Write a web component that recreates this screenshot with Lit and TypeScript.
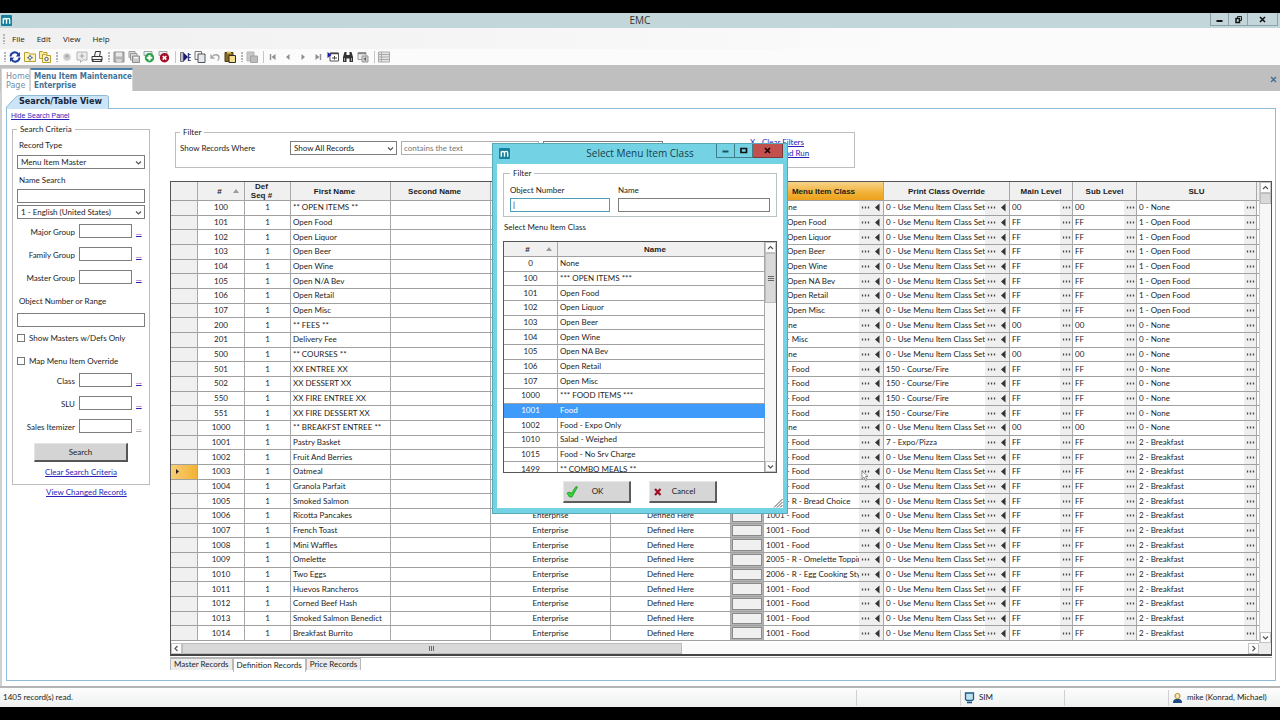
import { LitElement, html, css, svg, nothing } from "lit";
import { customElement, state } from "lit/decorators.js";
import { classMap } from "lit/directives/class-map.js";

type Rec = [id: string, name: string, cls: string, print: string, level: string, slu: string];

const SET = "0 - Use Menu Item Class Set";
const FIRE = "150 - Course/Fire";
const FOOD = "1001 - Food";
const BRK = "2 - Breakfast";
const OPEN = "1 - Open Food";
const NONE = "0 - None";

const RECORDS: Rec[] = [
  ["100", "** OPEN ITEMS **", NONE, SET, "00", NONE],
  ["101", "Open Food", "101 - Open Food", SET, "FF", OPEN],
  ["102", "Open Liquor", "102 - Open Liquor", SET, "FF", OPEN],
  ["103", "Open Beer", "103 - Open Beer", SET, "FF", OPEN],
  ["104", "Open Wine", "104 - Open Wine", SET, "FF", OPEN],
  ["105", "Open N/A Bev", "105 - Open NA Bev", SET, "FF", OPEN],
  ["106", "Open Retail", "106 - Open Retail", SET, "FF", OPEN],
  ["107", "Open Misc", "107 - Open Misc", SET, "FF", OPEN],
  ["200", "** FEES **", NONE, SET, "00", NONE],
  ["201", "Delivery Fee", "1500 - Misc", SET, "FF", NONE],
  ["500", "** COURSES **", NONE, SET, "00", NONE],
  ["501", "XX ENTREE XX", FOOD, FIRE, "FF", NONE],
  ["502", "XX DESSERT XX", FOOD, FIRE, "FF", NONE],
  ["550", "XX FIRE ENTREE XX", FOOD, FIRE, "FF", NONE],
  ["551", "XX FIRE DESSERT XX", FOOD, FIRE, "FF", NONE],
  ["1000", "** BREAKFST ENTREE **", NONE, SET, "00", NONE],
  ["1001", "Pastry Basket", FOOD, "7 - Expo/Pizza", "FF", BRK],
  ["1002", "Fruit And Berries", FOOD, SET, "FF", BRK],
  ["1003", "Oatmeal", FOOD, SET, "FF", BRK],
  ["1004", "Granola Parfait", FOOD, SET, "FF", BRK],
  ["1005", "Smoked Salmon", "2001 - R - Bread Choice", SET, "FF", BRK],
  ["1006", "Ricotta Pancakes", FOOD, SET, "FF", BRK],
  ["1007", "French Toast", FOOD, SET, "FF", BRK],
  ["1008", "Mini Waffles", FOOD, SET, "FF", BRK],
  ["1009", "Omelette", "2005 - R - Omelette Topping", SET, "FF", BRK],
  ["1010", "Two Eggs", "2006 - R - Egg Cooking Style", SET, "FF", BRK],
  ["1011", "Huevos Rancheros", FOOD, SET, "FF", BRK],
  ["1012", "Corned Beef Hash", FOOD, SET, "FF", BRK],
  ["1013", "Smoked Salmon Benedict", FOOD, SET, "FF", BRK],
  ["1014", "Breakfast Burrito", FOOD, SET, "FF", BRK],
];

const CLASSES: [string, string][] = [
  ["0", "None"],
  ["100", "*** OPEN ITEMS ***"],
  ["101", "Open Food"],
  ["102", "Open Liquor"],
  ["103", "Open Beer"],
  ["104", "Open Wine"],
  ["105", "Open NA Bev"],
  ["106", "Open Retail"],
  ["107", "Open Misc"],
  ["1000", "*** FOOD ITEMS ***"],
  ["1001", "Food"],
  ["1002", "Food - Expo Only"],
  ["1010", "Salad - Weighed"],
  ["1015", "Food - No Srv Charge"],
  ["1499", "** COMBO MEALS **"],
];

const ICONS: Record<string, unknown> = {
  refresh: svg`<path d="M1.500 5.500A4.300 4.300 0 0 1 9.500 3.500M10.500 6.500A4.300 4.300 0 0 1 2.500 8.500" fill="none" stroke="#1c3f9e" stroke-width="2"/><path d="M11 1v4.500H6.800zM1 11V6.500h4.200z" fill="#1c3f9e"/>`,
  folder: svg`<path d="M.5 10.500v-9h4l1 1.500h6v7.500z" fill="#fbf4bd" stroke="#b9a02c"/><path d="M6 4v5.500M3.300 6.700h5.400" stroke="#2f3f86" stroke-width="1"/><circle cx="6" cy="6.700" r="1.500" fill="#fff" stroke="#2f3f86" stroke-width=".7"/>`,
  folders: svg`<path d="M.5 7.500v-7h3l1 1h3.500v6z" fill="#f7eca0" stroke="#b9a02c"/><path d="M3.500 11.500v-8h3l1 1h4v7z" fill="#fbf4bd" stroke="#b9a02c"/><circle cx="7.500" cy="8" r="1.700" fill="#fff" stroke="#2f3f86" stroke-width=".9"/>`,
  dot: svg`<circle cx="6" cy="6" r="3.600" fill="#c9c9c9" stroke="#dcdcdc"/><circle cx="6" cy="5" r="1.600" fill="#a9a9a9"/>`,
  help: svg`<path d="M1 1h10v8H7l-2.500 2.500V9H1z" fill="#ececec" stroke="#b3b3b3"/><path d="M6 2.500v5M3.800 5h4.400" stroke="#a0a0a0"/>`,
  print: svg`<path d="M3.500 5.500l1-5h5l-1 5M1 5.500h10v4H1z" fill="#f4f4f4" stroke="#333"/><path d="M1 8h10v3H1z" fill="#3c3c3c"/><path d="M2.500 9.500h7" stroke="#eee"/>`,
  save: svg`<path d="M1 1h10v10H1z" fill="#b5b5b5" stroke="#8f8f8f"/><path d="M3 1.500h6v4H3z" fill="#e9e9e9"/><path d="M3.500 8h5v3h-5z" fill="#d6d6d6"/>`,
  saveall: svg`<path d="M1 .5h6v6H1z" fill="#ddd" stroke="#999"/><path d="M2.500 2.500h6.500v6.500H2.500z" fill="#ddd" stroke="#999"/><path d="M4.500 5h7v6.500h-7z" fill="#c9c9c9" stroke="#8d8d8d"/><path d="M6 6h4v1.500H6z" fill="#f4f4f4"/>`,
  add: svg`<path d="M1 .5h8v4H1z" fill="#e8eef0" stroke="#9aa6a6"/><circle cx="6.500" cy="6.800" r="4.700" fill="#27a34a"/><path d="M6.500 4v5.600M3.700 6.800h5.600" stroke="#fff" stroke-width="2"/>`,
  remove: svg`<path d="M1 .5h8v4H1z" fill="#e8eef0" stroke="#9aa6a6"/><circle cx="6.500" cy="6.800" r="4.700" fill="#a30d24"/><path d="M4.700 5l3.600 3.600M8.300 5L4.700 8.600" stroke="#fff" stroke-width="1.700"/>`,
  importer: svg`<path d="M1.500 1.500h3v9h-3z" fill="#b9bed0" stroke="#777"/><path d="M4.500 1.500L9 6l-4.500 4.500z" fill="#191970"/><path d="M9.500 2v8M11 3v1M11 6v1M11 9v1" stroke="#33397c" stroke-width="1.400"/>`,
  copy: svg`<path d="M1 .5h6.500v8H1z" fill="#f4f4f4" stroke="#777"/><path d="M4 3h7v8.500H4z" fill="#e4e9ef" stroke="#555"/>`,
  undo: svg`<path d="M2 3.500v3.500h3.500" fill="none" stroke="#a5a5a5" stroke-width="1.300"/><path d="M2.500 6.500C5 2.500 10 3 10 7c0 1-.5 2-1.500 2.500" fill="none" stroke="#a5a5a5" stroke-width="1.300"/>`,
  paste: svg`<path d="M1 1.500h8v9H1z" fill="#8b6b1f" stroke="#4c3a10"/><path d="M3 .5h4v2H3z" fill="#d9c66a"/><path d="M5 4.500h6.500v7H5z" fill="#f2df8c" stroke="#2c2c2c"/>`,
  form: svg`<path d="M1 1h7v9H1z" fill="#c8c8c8" stroke="#b5b5b5"/><path d="M4.500 5h7v6.500h-7z" fill="#bdbdbd" stroke="#a2a2a2"/>`,
  first: svg`<path d="M3.500 3v6" stroke="#8a8f96" stroke-width="1.400"/><path d="M8.500 3v6L4.500 6z" fill="#8a8f96"/>`,
  prev: svg`<path d="M7.500 3v6L4 6z" fill="#8a8f96"/>`,
  next: svg`<path d="M4.500 3v6L8 6z" fill="#8a8f96"/>`,
  last: svg`<path d="M8.500 3v6" stroke="#8a8f96" stroke-width="1.400"/><path d="M3.500 3v6L7.500 6z" fill="#8a8f96"/>`,
  goto: svg`<path d="M3 2h8.500v8H3z" fill="#fff" stroke="#555"/><path d="M3 2.500h8.500" stroke="#444" stroke-width="1.500"/><path d="M.5 1l4 3-4 3z" fill="#1a1ab0"/><path d="M5 7h5M7.500 5v3.500" stroke="#444"/>`,
  find: svg`<path d="M2.500 1h2v3h3V1h2l1.500 5v5H7.500V7.500h-3V11H1V6z" fill="#333"/><path d="M2.500 7v3M9.500 7v3" stroke="#aaa"/>`,
  link: svg`<path d="M1 1.500h8v7H1z" fill="#eee" stroke="#999"/><path d="M1 2.500h8" stroke="#888" stroke-width="1.500"/><path d="M5 5h6v6H5z" fill="#ccc" stroke="#999"/><path d="M9 6v4L6.500 8z" fill="#666"/>`,
  rows: svg`<path d="M.5 1h11v10H.5z" fill="#e6e6e6" stroke="#a9a9a9"/><path d="M.5 3.500h11M.5 6h11M.5 8.500h11M3.500 1v10" stroke="#a9a9a9"/>`,
};

const GROUPS: string[][] = [
  ["refresh", "folder", "folders"],
  ["dot", "help", "print"],
  ["save", "saveall", "add", "remove", "|", "importer", "copy", "undo", "paste"],
  ["form", "|", "first", "prev", "next", "last", "goto", "find", "link", "|", "rows"],
];

const logo = html`<svg class="logo" viewBox="0 0 12 12" aria-hidden="true">
  <rect width="12" height="12" rx="1" fill="#17809c" />
  <path d="M2.500 9.500V3.500M2.500 5C3 3.500 6 3 6 5.500v4M6 5.500c0-2.500 3.500-2.500 3.500 0v4" fill="none" stroke="#fff" stroke-width="1.500" />
</svg>`;

const chevron = (dir: "up" | "down" | "left" | "right") => {
  const d = { up: "M2 6l2.500-2.500L7 6", down: "M2 3.500L4.500 6 7 3.500", left: "M5.500 2L3 4.500 5.500 7", right: "M3.500 2L6 4.500 3.500 7" }[dir];
  return html`<svg class="chev" viewBox="0 0 9 9" aria-hidden="true"><path d=${d} fill="none" stroke="#555" stroke-width="1.200" /></svg>`;
};

const base = css`
  :host { box-sizing: border-box; font: 8px/11px Lato, "Liberation Sans", sans-serif; color: #1c1c1c; }
  * { box-sizing: border-box; }
  button, input, select { font: inherit; color: inherit; margin: 0; padding: 0; border: 0; border-radius: 0; background: none; min-width: 0; }
  fieldset { margin: 0; min-width: 0; border: 1px solid #bdbdbd; padding: 0 4px; }
  legend { padding: 0 3px; line-height: 10px; }
  a { color: #2a22b8; text-decoration: underline; }
  input.box { background: #fff; border: 1px solid #7d7d7d; height: 14px; width: 100%; padding: 0 2px; }
  table { display: flex; flex-direction: column; border-spacing: 0; }
  tr { display: grid; }
  th, td { padding: 0; min-width: 0; white-space: nowrap; overflow: hidden; display: flex; align-items: center; border-right: 1px solid #a8a8a8; border-bottom: 1px solid #a0a0a0; }
  th { justify-content: center; font-family: "Liberation Sans", sans-serif; font-weight: 700; background: #f0f0f0; }
  th.lead { padding-right: 12px; }
  .num { justify-content: center; }
  .sort { width: 6px; height: 4px; }
  .chev { width: 9px; height: 9px; display: block; }
  .logo { width: 12px; height: 12px; display: block; }
  .vbar { display: flex; flex-direction: column; background: #f7f7f7; }
  .arrow { width: 11px; height: 11px; display: grid; place-items: center; background: #fdfdfd; border: 1px solid #c4c4c4; flex: none; }
  .thumb { background: #d9d9d9; border: 1px solid #bcbcbc; display: grid; place-items: center; }
  .fill { flex: 1; }
  .bars { width: 6px; height: 5px; }
`;

const sortMark = html`<svg class="sort" viewBox="0 0 6 4" aria-hidden="true"><path d="M0 4l3-4 3 4z" fill="#9a9a9a" /></svg>`;

@customElement("class-dialog")
export class ClassDialog extends LitElement {
  @state() private selected = "1001";

  static styles = [base, css`
    :host { display: flex; flex-direction: column; background: #73d2e4; border: 1px solid #5aa9b8; padding: 0 4px 5px; }
    .title { display: grid; grid-template-columns: 56px 1fr 56px; align-items: start; height: 20px; }
    .title .logo { margin: 4px 0 0 2px; width: 11px; height: 11px; }
    h1 { margin: 3px 0 0; font: 400 10px/13px "Open Sans", "Noto Sans", sans-serif; text-align: center; color: #16414b; white-space: nowrap; }
    .wins { display: flex; justify-content: flex-end; width: 67px; justify-self: end; }
    .wins button { height: 14px; width: 19px; display: grid; place-items: center; border: 1px solid #3f7f8c; border-top: 0; border-left: 0; }
    .wins button:first-child { border-left: 1px solid #3f7f8c; }
    .wins .x { width: 30px; background: #c1504f; border-color: #7d3a3c; }
    .wins svg { width: 9px; height: 9px; }
    .body { background: #fff; flex: 1; padding: 4px 6px 0; display: flex; flex-direction: column; position: relative; }
    fieldset { display: grid; grid-template-columns: 100px 1fr; column-gap: 8px; padding: 6px 6px 4px; border-color: #b9c3c6; }
    label { display: flex; flex-direction: column; gap: 2px; line-height: 12px; }
    input.first { border-color: #4f9fb5; }
    .caption { margin: 4px 1px 8px; line-height: 12px; }
    .list { display: flex; border: 1px solid #555; height: 232px; }
    table { flex: 1; overflow: hidden; }
    thead { flex: none; height: 15px; }
    tr { grid-template-columns: 54px 1fr; height: 100%; }
    th.id { display: grid; grid-template-columns: 1fr 8px; padding: 0 3px 0 5px; text-align: center; }
    tbody { display: grid; grid-template-rows: repeat(15, minmax(0, 1fr)); height: 220px; flex: none; background: #fff; }
    td:last-child { padding-left: 2px; }
    .on td { background: #3f9bfa; color: #fff; border-color: #3f9bfa; }
    .thumb { height: 50px; }
    .actions { display: flex; gap: 18px; padding: 8px 0 0 60px; }
    .actions button { width: 68px; height: 22px; background: #d6d6d6; border: 1px solid #e8e8e8; border-right: 2px solid #5c5c5c; border-bottom: 2px solid #5c5c5c; display: grid; grid-template-columns: 14px 1fr 14px; align-items: center; padding-left: 2px; }
    .actions svg { width: 12px; height: 12px; }
    .grip { position: absolute; right: 0; bottom: 0; width: 10px; height: 10px; }
  `];

  render() {
    return html`
      <div class="title">
        ${logo}
        <h1>Select Menu Item Class</h1>
        <div class="wins">
          <button aria-label="Minimize"><svg viewBox="0 0 9 9"><path d="M1.500 5.500h6" stroke="#1c5260" stroke-width="2" /></svg></button>
          <button aria-label="Maximize"><svg viewBox="0 0 9 9"><path d="M2 2.500h5.500v4H2z" fill="none" stroke="#111" stroke-width="1.700" /></svg></button>
          <button class="x" aria-label="Close"><svg viewBox="0 0 9 9"><path d="M2 2l5 5M7 2L2 7" stroke="#200" stroke-width="1.700" /></svg></button>
        </div>
      </div>
      <div class="body">
        <fieldset>
          <legend>Filter</legend>
          <label>Object Number<input class="box first" value="|" /></label>
          <label>Name<input class="box" /></label>
        </fieldset>
        <div class="caption">Select Menu Item Class</div>
        <div class="list">
          <table>
            <thead><tr><th class="id"><span>#</span>${sortMark}</th><th class="lead">Name</th></tr></thead>
            <tbody>
              ${CLASSES.map(([id, name]) => html`<tr class=${classMap({ on: id === this.selected })} @click=${() => (this.selected = id)}>
                <td class="num">${id}</td><td>${name}</td></tr>`)}
            </tbody>
          </table>
          <div class="vbar">
            <div class="arrow">${chevron("up")}</div>
            <div class="thumb"><svg class="bars" viewBox="0 0 6 5"><path d="M0 .5h6M0 2.500h6M0 4.500h6" stroke="#666" /></svg></div>
            <div class="fill"></div>
            <div class="arrow">${chevron("down")}</div>
          </div>
        </div>
        <div class="actions">
          <button><svg viewBox="0 0 12 12"><path d="M1 7l3-1 1 2 5-7.500L11.500 1 6 11H3.500z" fill="#2ddc2d" stroke="#128a18" stroke-width=".7" /></svg><span>OK</span></button>
          <button><svg viewBox="0 0 12 12"><path d="M3 3l5.500 6M8.500 3L3 9" stroke="#9e1022" stroke-width="2.200" /></svg><span>Cancel</span></button>
        </div>
        <svg class="grip" viewBox="0 0 10 10"><path d="M1 9.500L9.500 1M4 9.500L9.500 4M7 9.500L9.500 7" stroke="#555" /></svg>
      </div>`;
  }
}

@customElement("app-root")
export class AppRoot extends LitElement {
  @state() private current = "1003";

  static styles = [base, css`
    :host { display: flex; flex-direction: column; height: 100vh; padding: 13px 0; background: #000; position: relative; overflow: hidden; }
    .title { display: grid; grid-template-columns: 80px 1fr 80px; height: 15px; background: #c3d7da; flex: none; }
    .title .logo { margin: 2px 0 0 1px; width: 11px; height: 11px; }
    .title h1 { margin: 0; font: 400 10px/15px "Open Sans", "Noto Sans", sans-serif; text-align: center; color: #333; }
    .wins { display: flex; justify-content: flex-end; padding-right: 2px; }
    .wins button { width: 19px; height: 13px; border: 1px solid #8ba3a8; border-top: 0; border-left: 0; display: grid; place-items: center; }
    .wins button:first-child { border-left: 1px solid #8ba3a8; }
    .wins button:last-child { width: 30px; }
    .wins svg { width: 9px; height: 9px; }
    .menu { display: flex; align-items: center; height: 21px; flex: none; background: linear-gradient(90deg, #f0f0f0, #fbfbfb 75%); padding-left: 3px; font: 8px/12px "Open Sans", "Noto Sans", sans-serif; color: #222; }
    .menu button { padding: 0 6px; }
    .grip { width: 3px; height: 10px; background: radial-gradient(circle at 1px 1px, #b5b5b5 1px, transparent 1px) 0 0 / 3px 3px; }
    .tools { display: flex; align-items: center; gap: 4px; height: 16px; flex: none; background: #fbfbfb; padding-left: 4px; }
    .group { display: flex; align-items: center; }
    .tool { width: 15px; height: 15px; display: grid; place-items: center; }
    .tool svg { width: 12px; height: 12px; }
    .rule { width: 6px; height: 12px; background: linear-gradient(#c6c6c6, #c6c6c6) 4px 0 / 1px 100% no-repeat; }
    .strip { display: flex; align-items: flex-start; background: #bfbfbf; height: 26px; padding: 3px 0 0 1px; flex: none; font-family: "DejaVu Sans", sans-serif; line-height: 9px; color: #6f93ac; }
    .strip button { background: #fff; height: 23px; padding: 2px 0 0 4px; text-align: left; border: 1px solid #d5d5d5; border-bottom: 0; width: 29px; }
    .strip .now { width: 103px; font-weight: 700; font-family: "DejaVu Sans Condensed", "DejaVu Sans", sans-serif; color: #437196; border-top: 2px solid #4d7da3; padding: 1px 0 0 3px; white-space: nowrap; }
    .strip .close { margin-left: auto; width: 14px; background: none; border: 0; }
    .strip svg { width: 7px; height: 7px; }
    .page { flex: 1; min-height: 0; background: #fff; border-left: 2px solid #d0d0d0; padding: 4px 4px 5px 4px; display: flex; flex-direction: column; }
    .view { position: relative; display: block; width: 103px; height: 13px; flex: none; z-index: 1; }
    .view svg { position: absolute; inset: 0; width: 103px; height: 14px; }
    .view span { position: relative; display: block; padding-left: 13px; font: 700 9px/13px "DejaVu Sans Condensed", "DejaVu Sans", sans-serif; color: #14243a; white-space: nowrap; }
    .panel { flex: 1; min-height: 0; border: 1px solid #8fbbd9; display: grid; grid-template-columns: 159px minmax(0, 1fr); padding: 2px 3px 9px 4px; }
    .side { display: flex; flex-direction: column; align-items: flex-start; }
    .hide { font: 7px/10px "Liberation Sans", sans-serif; }
    .criteria { width: 138px; margin: 3px 0 0 1px; padding: 5px 4px 6px; display: flex; flex-direction: column; }
    .top { padding: 0 2px; line-height: 12px; margin: 5px 0 3px; }
    .first { margin: 0 0 4px; }
    .pick { position: relative; display: block; height: 14px; }
    .pick select { appearance: none; width: 100%; height: 14px; border: 1px solid #7d7d7d; background: #fff; padding: 0 12px 0 3px; display: block; }
    .pick .chev { position: absolute; right: 2px; top: 3px; pointer-events: none; }
    .lang { margin: 2px 0 5px; }
    .range { margin: 2px 0 6px; }
    .pair { display: grid; grid-template-columns: 58px 53px 1fr; column-gap: 4px; align-items: center; margin-bottom: 9px; height: 14px; }
    .pair label { text-align: right; padding-top: 3px; white-space: nowrap; }
    .pair a { padding-top: 3px; }
    .pair .off { color: #aaa; }
    .tick { display: flex; align-items: center; gap: 4px; height: 12px; margin: 5px 0 6px; }
    .tick input { appearance: none; width: 8px; height: 8px; border: 1px solid #777; background: #fff; }
    .go { width: 94px; height: 19px; background: #d4d4d4; border: 1px solid #e4e4e4; border-right: 2px solid #555; border-bottom: 2px solid #555; align-self: center; margin: 1px 0 5px; }
    .center { align-self: center; }
    .changed { margin: 2px 0 0 35px; }
    .main { display: flex; flex-direction: column; min-height: 0; }
    .filter { width: 680px; height: 41px; margin: 16px 0 0 5px; display: flex; align-items: flex-start; padding-top: 4px; }
    .filter label { width: 110px; padding: 2px 0 0; }
    .filter .pick { width: 107px; }
    .filter .text { width: 138px; margin: 0 4px; border-color: #b0b0b0; color: #777; }
    .filter .wide { width: 120px; }
    .links { display: grid; grid-template-columns: 12px 1fr; margin: -4px 0 0 auto; width: 100px; }
    .links a:last-child { grid-column: 2; }
    .frame { flex: 1; min-height: 0; margin-top: 13px; border: 1px solid #555; border-bottom: 2px solid #444; display: flex; flex-direction: column; }
    .area { flex: 1; min-height: 0; display: flex; }
    table { flex: 1; min-width: 0; background: #fff; overflow: hidden; }
    thead { flex: none; height: 19px; }
    tbody { flex: 1; min-height: 0; display: grid; grid-template-rows: repeat(30, minmax(0, 1fr)); padding-bottom: 2px; }
    tr { grid-template-columns: 27px 47px 46px 100px 100px 120px 120px 33px 120px 126px 63px 64px minmax(60px, 1fr) 2px; height: 100%; }
    th:last-child, td:last-child { border-right: 0; }
    th.id { display: grid; grid-template-columns: 1fr 8px; padding: 0 3px 0 8px; text-align: center; }
    th.seq { line-height: 9px; text-align: center; padding-right: 12px; }
    th.hot { background: linear-gradient(#f6d38b, #f1b136 60%, #eda21c); }
    td.sel { background: #f0f0f0; }
    td.sel svg { width: 5px; height: 7px; margin-left: 4px; }
    td.sel.here { background: linear-gradient(90deg, #f8cf78, #f2b233); }
    td.txt { padding-left: 2px; }
    td.txt > span { flex: 1; min-width: 0; overflow: hidden; }
    td .btn { width: 12px; align-self: stretch; background: #efefef; display: grid; place-items: center; flex: none; }
    td .btn svg { width: 9px; height: 9px; }
    td.slot { background: #b5b5b5; padding: 1px; }
    td.slot button { width: 100%; height: 100%; background: #f0f0f0; border: 1px solid #8a8a8a; }
    .area .vbar { width: 12px; border-left: 1px solid #c9c9c9; }
    .area .thumb { height: 11px; }
    .hbar { display: flex; height: 11px; background: #fbfbfb; flex: none; }
    .hbar .thumb { width: 500px; }
    .corner { width: 12px; background: #ececec; }
    .sheets { display: flex; align-items: flex-start; border-top: 1px solid #b5b5b5; margin-top: 1px; height: 14px; flex: none; }
    .sheets button { height: 12px; background: #ececec; border: 1px solid #b9b9b9; border-bottom: 0; padding: 0 3px; white-space: nowrap; }
    .sheets .now { height: 14px; background: #fff; }
    .status { display: grid; grid-template-columns: minmax(0, 1fr) 104px 104px 104px 112px; height: 21px; flex: none; border-top: 2px solid #b5b5b5; background: linear-gradient(#fdfdfd, #eef0f0); align-items: center; }
    .status span { display: flex; align-items: center; gap: 4px; height: 16px; padding-left: 3px; }
    .status span + span { border-left: 1px solid #d0d0d0; }
    .status svg { width: 11px; height: 12px; }
    class-dialog { position: absolute; left: 492px; top: 143px; width: 296px; height: 371px; z-index: 3; }
    .cursor { position: absolute; left: 861px; top: 470px; width: 8px; height: 12px; z-index: 3; }
  `];

  private more() {
    return html`<button class="btn" aria-label="Browse"><svg viewBox="0 0 9 9"><path d="M1.500 3.500v2M4.500 3.500v2M7.500 3.500v2" stroke="#444" stroke-width="1.300" /></svg></button>`;
  }

  private inherit() {
    return html`<button class="btn" aria-label="Inherit"><svg viewBox="0 0 9 9"><path d="M6.500 .5v8L2 4.500z" fill="#333" /></svg></button>`;
  }

  private pair(id: string, label: string, off = false) {
    return html`<div class="pair"><label for=${id}>${label}</label><input class="box" id=${id} />
      <a href="#" class=${classMap({ off })}>...</a></div>`;
  }

  private row([id, name, cls, print, level, slu]: Rec) {
    const here = id === this.current;
    return html`<tr @click=${() => (this.current = id)}>
      <td class=${classMap({ sel: true, here })}>${here ? html`<svg viewBox="0 0 5 7"><path d="M1 1v5l3-2.500z" fill="#222" /></svg>` : nothing}</td>
      <td class="num">${id}</td><td class="num">1</td><td class="txt"><span>${name}</span></td><td></td>
      <td class="num">Enterprise</td><td class="num">Defined Here</td><td class="slot"><button aria-label="Details"></button></td>
      <td class="txt"><span>${cls}</span>${this.more()}${this.inherit()}</td>
      <td class="txt"><span>${print}</span>${this.more()}${this.inherit()}</td>
      <td class="txt"><span>${level}</span>${this.more()}</td>
      <td class="txt"><span>${level}</span>${this.more()}</td>
      <td class="txt"><span>${slu}</span>${this.more()}</td><td></td></tr>`;
  }

  render() {
    return html`
      <header class="title">
        ${logo}
        <h1>EMC</h1>
        <div class="wins">
          <button aria-label="Minimize"><svg viewBox="0 0 9 9"><path d="M1.500 6h6" stroke="#111" stroke-width="2" /></svg></button>
          <button aria-label="Restore"><svg viewBox="0 0 9 9"><path d="M3.500 3V1.500h4v4H6" fill="none" stroke="#222" /><path d="M2 3.500h3.500v4H2z" fill="none" stroke="#111" stroke-width="1.500" /></svg></button>
          <button aria-label="Close"><svg viewBox="0 0 9 9"><path d="M2 2l5 5M7 2L2 7" stroke="#111" stroke-width="1.600" /></svg></button>
        </div>
      </header>
      <nav class="menu"><div class="grip"></div>${["File", "Edit", "View", "Help"].map((m) => html`<button>${m}</button>`)}</nav>
      <div class="tools">
        ${GROUPS.map((g) => html`<div class="group"><div class="grip"></div>${g.map((n) =>
          n === "|" ? html`<div class="rule"></div>` : html`<button class="tool" aria-label=${n}><svg viewBox="0 0 12 12">${ICONS[n]}</svg></button>`)}</div>`)}
      </div>
      <div class="strip">
        <button>Home<br />Page</button>
        <button class="now">Menu Item Maintenance<br />Enterprise</button>
        <button class="close" aria-label="Close tab"><svg viewBox="0 0 7 7"><path d="M1 1l5 5M6 1L1 6" stroke="#3e6f97" stroke-width="1.400" /></svg></button>
      </div>
      <main class="page">
        <div class="view">
          <svg viewBox="0 0 103 14" aria-hidden="true"><path d="M.5 14V12L10 2Q11.500 .5 14 .5H100.500Q102.500 .5 102.500 2.500V14" fill="#cbe4f8" stroke="#8fbbd9" /></svg>
          <span>Search/Table View</span>
        </div>
        <div class="panel">
          <section class="side">
            <a href="#" class="hide">Hide Search Panel</a>
            <fieldset class="criteria">
              <legend>Search Criteria</legend>
              <label class="top first" for="type">Record Type</label>
              <div class="pick"><select id="type"><option>Menu Item Master</option></select>${chevron("down")}</div>
              <label class="top" for="name">Name Search</label>
              <input class="box" id="name" />
              <div class="pick lang"><select aria-label="Language"><option>1 - English (United States)</option></select>${chevron("down")}</div>
              ${this.pair("major", "Major Group")}${this.pair("family", "Family Group")}${this.pair("master", "Master Group")}
              <label class="top range" for="range">Object Number or Range</label>
              <input class="box" id="range" />
              <label class="tick"><input type="checkbox" />Show Masters w/Defs Only</label>
              <label class="tick"><input type="checkbox" />Map Menu Item Override</label>
              ${this.pair("class", "Class")}${this.pair("slu", "SLU")}${this.pair("itemizer", "Sales Itemizer", true)}
              <button class="go">Search</button>
              <a href="#" class="center">Clear Search Criteria</a>
            </fieldset>
            <a href="#" class="changed">View Changed Records</a>
          </section>
          <section class="main">
            <fieldset class="filter">
              <legend>Filter</legend>
              <label for="where">Show Records Where</label>
              <div class="pick"><select id="where"><option>Show All Records</option></select>${chevron("down")}</div>
              <input class="box text" aria-label="Condition" value="contains the text" />
              <div class="pick wide"><select aria-label="Value"><option></option></select></div>
              <div class="links"><a href="#">X</a><a href="#">Clear Filters</a><a href="#">Save and Run</a></div>
            </fieldset>
            <div class="frame">
              <div class="area">
                <table>
                  <thead><tr>
                    <th></th><th class="id"><span>#</span>${sortMark}</th><th class="seq">Def<br />Seq #</th><th class="lead">First Name</th><th class="lead">Second Name</th>
                    <th></th><th></th><th></th><th class="hot">Menu Item Class</th><th>Print Class Override</th><th>Main Level</th><th>Sub Level</th><th>SLU</th><th></th>
                  </tr></thead>
                  <tbody>${RECORDS.map((r) => this.row(r))}</tbody>
                </table>
                <div class="vbar"><div class="arrow">${chevron("up")}</div><div class="thumb"></div><div class="fill"></div><div class="arrow">${chevron("down")}</div></div>
              </div>
              <div class="hbar">
                <div class="arrow">${chevron("left")}</div>
                <div class="thumb"><svg class="bars" viewBox="0 0 6 5"><path d="M.5 0v5M2.500 0v5M4.500 0v5" stroke="#666" /></svg></div>
                <div class="fill"></div><div class="arrow">${chevron("right")}</div><div class="corner"></div>
              </div>
            </div>
            <div class="sheets"><button>Master Records</button><button class="now">Definition Records</button><button>Price Records</button></div>
          </section>
        </div>
      </main>
      <footer class="status">
        <span>1405 record(s) read.</span><span></span>
        <span><svg viewBox="0 0 11 12"><path d="M1.500 1h8v6.500l-1.500 1H3l-1.500-1z" fill="#bfe0ef" stroke="#1d5c86" stroke-width="1.300" /><path d="M3 10.500h5" stroke="#1d5c86" stroke-width="1.600" /></svg>SIM</span>
        <span></span>
        <span><svg viewBox="0 0 11 12"><circle cx="5.500" cy="4" r="2.600" fill="#f6e7b5" stroke="#b48a2a" /><path d="M1 11c0-3 1.500-4 3-4h3c1.500 0 3 1 3 4z" fill="#1c4a80" /></svg>mike (Konrad, Michael)</span>
      </footer>
      <class-dialog></class-dialog>
      <svg class="cursor" viewBox="0 0 8 12" aria-hidden="true"><path d="M1 1v8l2-2 1.500 3.500 1.500-.7L4.500 6.500H7z" fill="#fff" stroke="#777" stroke-width=".8" /></svg>`;
  }
}
